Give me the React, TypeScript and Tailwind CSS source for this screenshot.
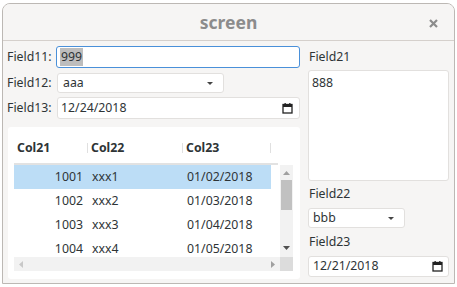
import React from "react";

const font = { fontFamily: '"Noto Sans", "Open Sans", sans-serif' };

function Caret() {
  return (
    <svg width="6" height="3" viewBox="0 0 6 3" className="shrink-0">
      <path d="M0 0 L6 0 L3 3 Z" fill="#444" />
    </svg>
  );
}

function Cal() {
  return (
    <svg width="11" height="11" viewBox="0 0 11 11" className="shrink-0">
      <rect x="1" y="1.5" width="9" height="8.5" fill="none" stroke="#222" strokeWidth="1.3" />
      <rect x="1" y="1.5" width="9" height="2.5" fill="#222" />
      <rect x="2.5" y="0" width="1.3" height="2" fill="#222" />
      <rect x="7.2" y="0" width="1.3" height="2" fill="#222" />
    </svg>
  );
}

const rows = [
  ["1001", "xxx1", "01/02/2018"],
  ["1002", "xxx2", "01/03/2018"],
  ["1003", "xxx3", "01/04/2018"],
  ["1004", "xxx4", "01/05/2018"],
];

export default function App() {
  return (
    <div className="w-[457px] h-[287px] bg-white overflow-hidden pl-[2px] pt-[3px] text-[12.3px] text-[#2e3436]" style={font}>
      <div className="w-[453px] h-[281px] border border-[#bcb8b4] rounded-t-[8px] bg-[#f6f5f4] flex flex-col overflow-hidden">
        <div className="h-[37px] shrink-0 relative flex items-center justify-center border-b border-[#d5d0cc] bg-[#f6f5f4]">
          <span className="text-[17.5px] font-bold text-[#8c8c8c] mt-[1px]">screen</span>
          <svg width="9" height="9" viewBox="0 0 9 9" className="absolute right-[16px] top-[15px]">
            <path d="M1 1 L8 8 M8 1 L1 8" stroke="#8c8c8c" strokeWidth="2.2" strokeLinecap="butt" />
          </svg>
        </div>
        <div className="flex flex-1 pl-[4px] pr-[5px] pt-[5px]">
          <div className="w-[293px] flex flex-col">
            <div className="flex items-center h-[22px]">
              <span className="w-[49px]">Field11:</span>
              <div className="flex-1 h-[22px] border border-[#4a90d9] rounded-[3px] bg-white flex items-center pl-[3px]">
                <span className="bg-[#bdbdbd] px-[1px]">999</span>
              </div>
            </div>
            <div className="flex items-center h-[20px] mt-[5px]">
              <span className="w-[50px]">Field12:</span>
              <div className="w-[167px] h-[20px] border border-[#e2e0de] rounded-[3px] bg-white flex items-center justify-between pl-[5px] pr-[10px]">
                <span>aaa</span>
                <Caret />
              </div>
            </div>
            <div className="flex items-center h-[22px] mt-[4px]">
              <span className="w-[50px]">Field13:</span>
              <div className="flex-1 h-[22px] border border-[#e2e0de] rounded-[3px] bg-white flex items-center justify-between pl-[3px] pr-[6px]">
                <span>12/24/2018</span>
                <Cal />
              </div>
            </div>
            <div className="mt-[8px] ml-[1px] w-[292px] h-[152px] bg-white rounded-[3px] pl-[6px] pt-[10px] flex flex-col">
              <div className="flex items-center h-[26px] pb-[4px] w-[264px] font-bold">
                <span className="w-[73px] pl-[3px]">Col21</span>
                <span className="w-[1px] h-[10px] bg-[#e0e0e0]" />
                <span className="w-[94px] pl-[3px]">Col22</span>
                <span className="w-[1px] h-[10px] bg-[#e0e0e0]" />
                <span className="w-[87px] pl-[3px]">Col23</span>
                <span className="w-[1px] h-[10px] bg-[#e0e0e0]" />
              </div>
              <div className="h-[2px] w-[264px] bg-[#e2e2e2]" />
              <div className="flex">
                <div className="w-[266px] flex flex-col h-[92px] overflow-hidden">
                  {rows.map((r, i) => (
                    <div key={r[0]} className={`flex items-center h-[24px] shrink-0 w-[257px] ${i === 0 ? "bg-[#bcddf6]" : ""}`}>
                      <span className="w-[69px] text-right">{r[0]}</span>
                      <span className="w-[104px] pl-[9px]">{r[1]}</span>
                      <span>{r[2]}</span>
                    </div>
                  ))}
                </div>
                <div className="w-[13px] h-[92px] bg-[#f2f2f2] flex flex-col items-center">
                  <svg width="7" height="4" viewBox="0 0 7 4" className="mt-[6px]"><path d="M0 4 L7 4 L3.5 0 Z" fill="#a0a0a0" /></svg>
                  <div className="w-[11px] h-[30px] bg-[#c1c1c1] mt-[5px]" />
                  <div className="flex-1" />
                  <svg width="7" height="4" viewBox="0 0 7 4" className="mb-[7px]"><path d="M0 0 L7 0 L3.5 4 Z" fill="#505050" /></svg>
                </div>
              </div>
              <div className="flex h-[14px]">
                <div className="w-[266px] bg-[#f2f2f2] flex items-center justify-between px-[5px]">
                  <svg width="4" height="7" viewBox="0 0 4 7"><path d="M4 0 L4 7 L0 3.5 Z" fill="#c8c8c8" /></svg>
                  <svg width="4" height="7" viewBox="0 0 4 7"><path d="M0 0 L0 7 L4 3.5 Z" fill="#a0a0a0" /></svg>
                </div>
                <div className="w-[13px] bg-[#dcdcdc]" />
              </div>
            </div>
          </div>
          <div className="ml-[8px] flex-1 flex flex-col">
            <div className="h-[22px] flex items-center pl-[1px]">Field21</div>
            <div className="mt-[2px] h-[111px] border border-[#e2e0de] rounded-[3px] bg-white pl-[3px] pt-[3px]">888</div>
            <div className="h-[22px] mt-[2px] flex items-center pl-[1px]">Field22</div>
            <div className="w-[97px] h-[20px] mt-[3px] border border-[#e2e0de] rounded-[3px] bg-white flex items-center justify-between pl-[4px] pr-[10px]">
              <span>bbb</span>
              <Caret />
            </div>
            <div className="h-[22px] mt-[3px] flex items-center pl-[1px]">Field23</div>
            <div className="h-[21px] mt-[3px] border border-[#e2e0de] rounded-[3px] bg-white flex items-center justify-between pl-[4px] pr-[5px]">
              <span>12/21/2018</span>
              <Cal />
            </div>
          </div>
        </div>
      </div>
    </div>
  );
}
